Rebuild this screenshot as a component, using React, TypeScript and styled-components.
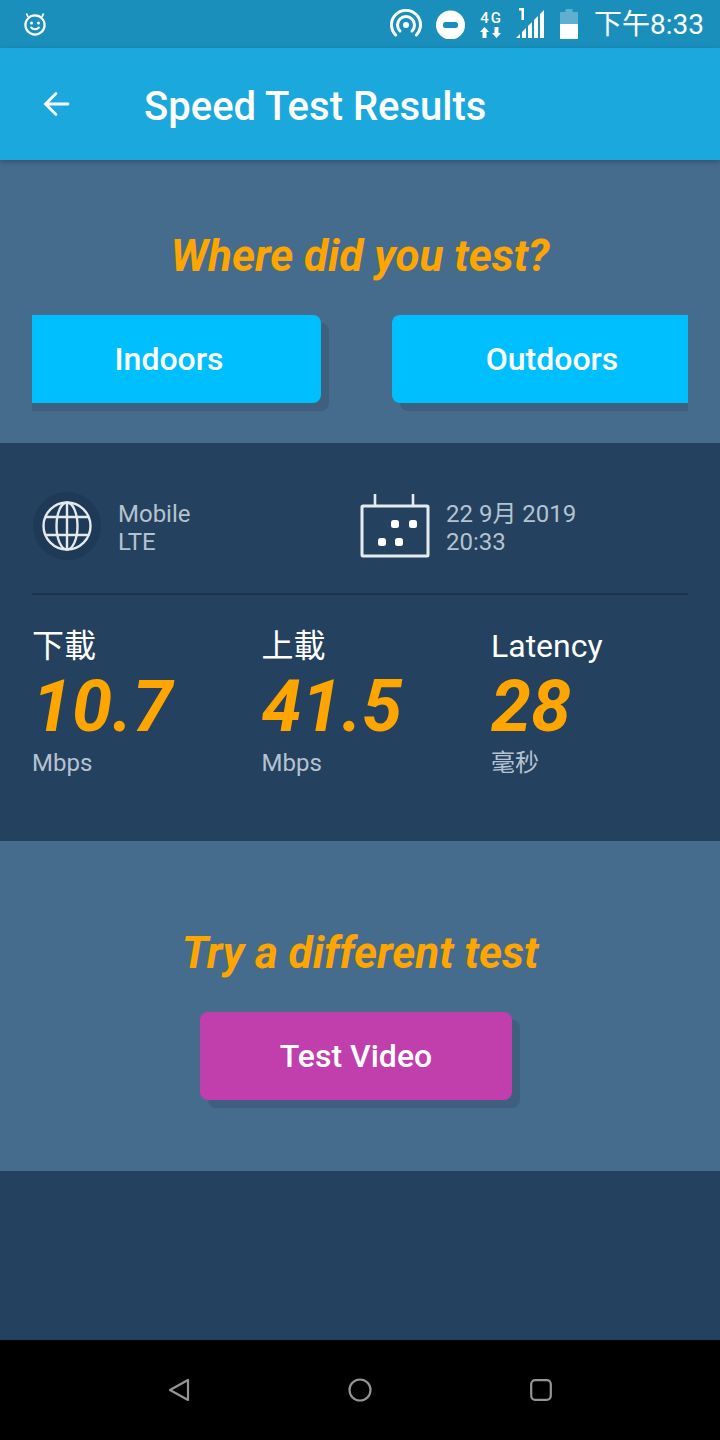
import React from 'react';
import styled, {createGlobalStyle} from 'styled-components';

const GlobalStyle = createGlobalStyle`
    * {
        box-sizing: border-box;
    }

    html, body {
        margin: 0;
        padding: 0;
        background: #24415f;
    }

    body {
        font-family: Roboto, "Noto Sans CJK TC", sans-serif;
    }
`;

const App: React.FC = () => {
    return (
        <Page>
            <GlobalStyle/>
            <StatusBar>
                <svg width="26" height="26" viewBox="0 0 26 26" fill="none" stroke="#fff" strokeWidth="2.2">
                    <circle cx="13" cy="14" r="9.6"/>
                    <path d="M6 6 L4.5 2.5 M20 6 L21.5 2.5" strokeWidth="1.8"/>
                    <circle cx="9.5" cy="12" r="1.5" fill="#fff" stroke="none"/>
                    <circle cx="16.5" cy="12" r="1.5" fill="#fff" stroke="none"/>
                    <path d="M8.5 16 Q13 20.5 17.5 16" strokeWidth="1.8"/>
                </svg>
                <StatusRight>
                    <svg width="32" height="30" viewBox="0 0 32 30" fill="none" stroke="#fff" strokeWidth="3" strokeLinecap="round">
                        <path d="M5.7 26 A14.5 14.5 0 1 1 26.3 26"/>
                        <path d="M10 22 A8.5 8.5 0 1 1 22 22"/>
                        <circle cx="16" cy="16" r="3" fill="#fff" stroke="none"/>
                    </svg>
                    <svg width="29" height="30" viewBox="0 0 29 30">
                        <circle cx="14.5" cy="16" r="14.5" fill="#fff"/>
                        <rect x="7" y="13" width="15" height="6" rx="2.5" fill="#1a8fbc"/>
                    </svg>
                    <NetworkIcon>
                        <NetworkLabel>4G</NetworkLabel>
                        <svg width="23" height="11" viewBox="0 0 23 11" fill="#fff">
                            <path d="M5.5 0 L10 5 H7.5 V11 H3.5 V5 H1 Z"/>
                            <path d="M17.5 11 L22 6 H19.5 V0 H15.5 V6 H13 Z"/>
                        </svg>
                    </NetworkIcon>
                    <svg width="28" height="34" viewBox="0 2 28 34" fill="#fff">
                        <path d="M3 3 H8 V15 H5.5 V5.5 H3 Z"/>
                        <path d="M0 33 L4 29 V33 Z"/>
                        <path d="M6 33 V27 L10 23 V33 Z"/>
                        <path d="M12 33 V21 L16 17 V33 Z"/>
                        <path d="M18 33 V15 L22 11 V33 Z"/>
                        <path d="M24 33 V9 L28 5 V33 Z"/>
                    </svg>
                    <svg width="22" height="30" viewBox="0 0 22 30">
                        <path d="M7.5 0 H14.5 V3 H19 Q20 3 20 4 V30 H2 V4 Q2 3 3 3 H7.5 Z" fill="#fff" fillOpacity="0.3"/>
                        <path d="M2 15 H20 V29 Q20 30 19 30 H3 Q2 30 2 29 Z" fill="#fff"/>
                    </svg>
                    <Clock>下午8:33</Clock>
                </StatusRight>
            </StatusBar>

            <Toolbar>
                <svg width="28" height="28" viewBox="0 0 28 28" fill="none" stroke="#fff" strokeWidth="2.8" strokeLinecap="round">
                    <path d="M25 14 H3 M13 3.5 L2.5 14 L13 24.5"/>
                </svg>
                <ToolbarTitle>Speed Test Results</ToolbarTitle>
            </Toolbar>

            <LightSection>
                <Question>Where did you test?</Question>
                <ChoiceRow>
                    <ChoiceButton $side="left">Indoors</ChoiceButton>
                    <ChoiceButton $side="right">Outdoors</ChoiceButton>
                </ChoiceRow>
            </LightSection>

            <ResultSection>
                <MetaRow>
                    <MetaItem>
                        <GlobeBadge>
                            <svg width="50" height="50" viewBox="0 0 50 50" fill="none" stroke="#e4e9ee" strokeWidth="2.4">
                                <circle cx="25" cy="25" r="23.5"/>
                                <ellipse cx="25" cy="25" rx="10.5" ry="23.5"/>
                                <path d="M25 1.5 V48.5 M3.5 16 H46.5 M3.5 34 H46.5"/>
                            </svg>
                        </GlobeBadge>
                        <MetaText>Mobile<br/>LTE</MetaText>
                    </MetaItem>
                    <MetaItem>
                        <svg width="70" height="64" viewBox="0 0 70 64" fill="none" stroke="#e6ebf0" strokeWidth="3">
                            <rect x="2" y="12" width="66" height="50" rx="1"/>
                            <path d="M15 0 V12 M53 0 V12" strokeWidth="2.6"/>
                            <g fill="#fff" stroke="none">
                                <rect x="31" y="26" width="8" height="8" rx="2.5"/>
                                <rect x="49" y="26" width="8" height="8" rx="2.5"/>
                                <rect x="18" y="44" width="8" height="8" rx="2.5"/>
                                <rect x="35" y="44" width="8" height="8" rx="2.5"/>
                            </g>
                        </svg>
                        <MetaText>22 9月 2019<br/>20:33</MetaText>
                    </MetaItem>
                </MetaRow>
                <Divider/>
                <Stats>
                    <Stat>
                        <StatLabel>下載</StatLabel>
                        <StatValue>10.7</StatValue>
                        <StatUnit>Mbps</StatUnit>
                    </Stat>
                    <Stat>
                        <StatLabel>上載</StatLabel>
                        <StatValue>41.5</StatValue>
                        <StatUnit>Mbps</StatUnit>
                    </Stat>
                    <Stat>
                        <StatLabel>Latency</StatLabel>
                        <StatValue>28</StatValue>
                        <StatUnit>毫秒</StatUnit>
                    </Stat>
                </Stats>
            </ResultSection>

            <TrySection>
                <TryTitle>Try a different test</TryTitle>
                <VideoButton>Test Video</VideoButton>
            </TrySection>

            <Filler/>

            <NavBar>
                <svg width="22" height="24" viewBox="0 0 22 24" fill="none" stroke="#959595" strokeWidth="2.2" strokeLinejoin="round">
                    <path d="M20 2 V22 L2 12 Z"/>
                </svg>
                <svg width="26" height="26" viewBox="0 0 26 26" fill="none" stroke="#959595" strokeWidth="2.2">
                    <circle cx="13" cy="13" r="10.5"/>
                </svg>
                <svg width="22" height="24" viewBox="0 0 22 24" fill="none" stroke="#959595" strokeWidth="2.2">
                    <rect x="1.2" y="2.2" width="19.6" height="19.6" rx="4"/>
                </svg>
            </NavBar>
        </Page>
    );
};

export default App;

const Page = styled.div`
    width: 720px;
    height: 1440px;
    display: flex;
    flex-direction: column;
    overflow: hidden;
`;

const StatusBar = styled.div`
    height: 48px;
    background: #1a8fbc;
    display: flex;
    align-items: center;
    justify-content: space-between;
    padding: 0 16px 0 22px;
    flex-shrink: 0;
`;

const StatusRight = styled.div`
    display: flex;
    align-items: center;
    gap: 14px;
`;

const NetworkIcon = styled.div`
    display: flex;
    flex-direction: column;
    align-items: center;
    gap: 3px;
    margin-top: 2px;
`;

const NetworkLabel = styled.span`
    color: #fff;
    font-size: 15px;
    font-weight: 500;
    line-height: 12px;
    letter-spacing: 2px;
    margin-right: -2px;
`;

const Clock = styled.span`
    color: #fff;
    font-size: 28px;
    line-height: 32px;
    margin-top: 2px;
`;

const Toolbar = styled.div`
    height: 112px;
    background: #1ba8dc;
    display: flex;
    align-items: center;
    padding-left: 43px;
    gap: 73px;
    flex-shrink: 0;
    position: relative;
    z-index: 1;
    box-shadow: 0 2px 5px rgba(0, 0, 0, .25);
`;

const ToolbarTitle = styled.h1`
    margin: 4px 0 0;
    color: #fff;
    font-size: 40px;
    font-weight: 500;
    white-space: nowrap;
`;

const LightSection = styled.div`
    height: 283px;
    background: #466c8d;
    padding-top: 72px;
    flex-shrink: 0;
`;

const Question = styled.h2`
    margin: 0;
    text-align: center;
    color: #ffa500;
    font-size: 44px;
    line-height: 48px;
    font-weight: 700;
    font-style: italic;
`;

const ChoiceRow = styled.div`
    margin: 35px 32px 0;
    height: 96px;
    display: flex;
    justify-content: space-between;
    overflow: hidden;
`;

const ChoiceButton = styled.div<{ $side: 'left' | 'right' }>`
    flex: none;
    width: ${props => props.$side === 'left' ? '304px' : '320px'};
    height: 88px;
    background: #00bfff;
    color: #fff;
    font-size: 32px;
    font-weight: 500;
    display: flex;
    align-items: center;
    justify-content: center;
    border-radius: 8px;
    box-shadow: 8px 8px 0 rgba(40, 60, 85, .25);
    margin-left: ${props => props.$side === 'left' ? '-15px' : '0'};
    margin-right: ${props => props.$side === 'left' ? '0' : '-24px'};
`;

const ResultSection = styled.div`
    height: 398px;
    background: #24415f;
    padding: 48px 32px 0;
    flex-shrink: 0;
`;

const MetaRow = styled.div`
    display: grid;
    grid-template-columns: 328px 1fr;
    height: 70px;
    align-items: center;
`;

const MetaItem = styled.div`
    display: flex;
    align-items: center;
    gap: 17px;
`;

const GlobeBadge = styled.div`
    width: 68px;
    height: 68px;
    margin: 0 1px 0 1px;
    border-radius: 50%;
    background: #1f3a56;
    display: flex;
    align-items: center;
    justify-content: center;
`;

const MetaText = styled.div`
    color: #b5c3d0;
    font-size: 24px;
    line-height: 28px;
    margin-top: 4px;
    margin-left: -1px;
`;

const Divider = styled.div`
    height: 2px;
    background: #1b334d;
    margin-top: 32px;
`;

const Stats = styled.div`
    display: grid;
    grid-template-columns: 229.5px 229.5px 1fr;
    margin-top: 29px;
`;

const Stat = styled.div`
    display: flex;
    flex-direction: column;
`;

const StatLabel = styled.div`
    color: #fff;
    font-size: 32px;
    line-height: 44px;
    margin-bottom: 1px;
`;

const StatValue = styled.div`
    color: #ffa500;
    font-size: 72px;
    line-height: 76px;
    font-weight: 700;
    font-style: italic;
`;

const StatUnit = styled.div`
    color: #b5c3d0;
    font-size: 24px;
    line-height: 36px;
`;

const TrySection = styled.div`
    height: 330px;
    background: #466c8d;
    padding-top: 88px;
    display: flex;
    flex-direction: column;
    align-items: center;
    flex-shrink: 0;
`;

const TryTitle = styled.h2`
    margin: 0;
    color: #ffa500;
    font-size: 44px;
    line-height: 48px;
    font-weight: 700;
    font-style: italic;
`;

const VideoButton = styled.div`
    margin-top: 35px;
    margin-left: -8px;
    width: 312px;
    height: 88px;
    background: #c03fad;
    color: #fff;
    font-size: 32px;
    font-weight: 500;
    display: flex;
    align-items: center;
    justify-content: center;
    border-radius: 8px;
    box-shadow: 8px 8px 0 rgba(40, 60, 85, .25);
`;

const Filler = styled.div`
    flex: 1;
    background: #24415f;
`;

const NavBar = styled.div`
    height: 100px;
    background: #000;
    display: flex;
    align-items: center;
    justify-content: space-between;
    padding: 0 168px;
    flex-shrink: 0;
`;
